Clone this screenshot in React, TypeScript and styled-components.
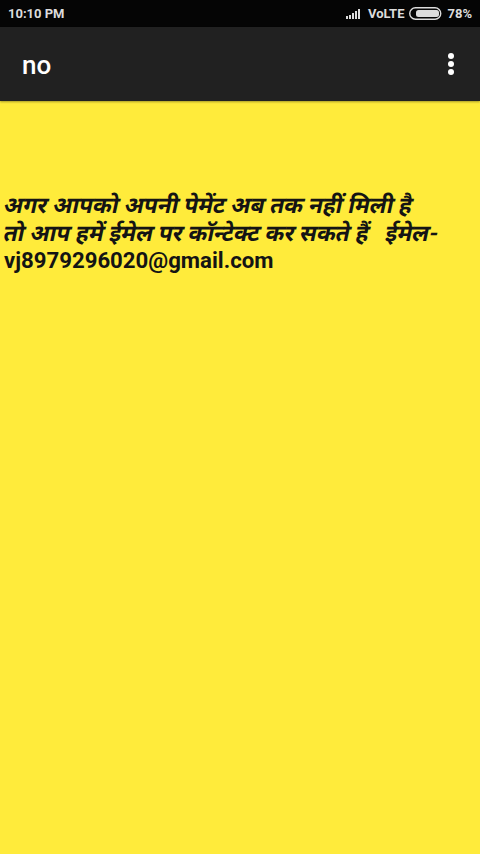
import React from "react";
import styled, { createGlobalStyle } from "styled-components";

const Global = createGlobalStyle`
  html, body { margin: 0; padding: 0; background: #ffeb3b; }
  #root { width: 480px; height: 854px; overflow: hidden; }
`;

const Screen = styled.div`
  width: 480px;
  height: 854px;
  display: flex;
  flex-direction: column;
  background: #ffeb3b;
  font-family: Roboto, "Noto Sans", sans-serif;
`;

const StatusBar = styled.header`
  height: 27px;
  flex: none;
  background: #050505;
  color: #dcdcdc;
  display: flex;
  align-items: center;
  justify-content: space-between;
  padding: 0 8px 0 8px;
  font-size: 13px;
  font-weight: 700;
`;

const StatusGroup = styled.div`
  display: flex;
  align-items: center;
  gap: 5px;
`;

const AppBar = styled.div`
  height: 74px;
  flex: none;
  box-sizing: border-box;
  background: #212121;
  color: #fff;
  display: flex;
  align-items: center;
  justify-content: space-between;
  padding: 2px 26px 0 22px;
  box-shadow: 0 1px 2px rgba(0, 0, 0, 0.35);
  position: relative;
`;

const Title = styled.h1`
  margin: 0;
  font-size: 26px;
  font-weight: 500;
  line-height: 30px;
`;

const Overflow = styled.div`
  display: flex;
  flex-direction: column;
  gap: 2px;
  margin-top: -3px;
`;

const Dot = styled.span`
  width: 6px;
  height: 6px;
  border-radius: 50%;
  background: #fff;
`;

const Content = styled.main`
  flex: 1;
  padding: 89px 4px 0;
`;

const Message = styled.div`
  color: #141414;
  line-height: 28px;
  font-weight: 700;
`;

const HindiLine = styled.div`
  font-size: 22.8px;
  white-space: pre;
  transform: translate(-3px, 2px) skewX(-12deg);
  transform-origin: 0 100%;
`;

const Email = styled.div`
  font-size: 22.2px;
`;

export default function App() {
  return (
    <Screen>
      <Global />
      <StatusBar>
        <span>10:10 PM</span>
        <StatusGroup>
          <svg width="17" height="11" viewBox="0 0 17 11">
            <rect x="0" y="8" width="2" height="3" fill="#dcdcdc" />
            <rect x="3" y="7" width="2" height="4" fill="#dcdcdc" />
            <rect x="6" y="5" width="2" height="6" fill="#dcdcdc" />
            <rect x="9" y="3" width="2" height="8" fill="#dcdcdc" />
            <rect x="12" y="1" width="2" height="10" fill="#dcdcdc" />
          </svg>
          <span>VoLTE</span>
          <svg width="33" height="13" viewBox="0 0 33 13">
            <rect x="0.75" y="0.75" width="31" height="11.5" rx="5.7" fill="none" stroke="#dcdcdc" strokeWidth="1.4" />
            <rect x="7" y="3" width="23" height="7" rx="2.5" fill="#dcdcdc" />
          </svg>
          <span>78%</span>
        </StatusGroup>
      </StatusBar>
      <AppBar>
        <Title>no</Title>
        <Overflow>
          <Dot />
          <Dot />
          <Dot />
        </Overflow>
      </AppBar>
      <Content>
        <Message>
          <HindiLine>अगर आपको अपनी पेमेंट अब तक नहीं मिली है</HindiLine>
          <HindiLine>तो आप हमें ईमेल पर कॉन्टेक्ट कर सकते हैं   ईमेल-</HindiLine>
          <Email>vj8979296020@gmail.com</Email>
        </Message>
      </Content>
    </Screen>
  );
}
